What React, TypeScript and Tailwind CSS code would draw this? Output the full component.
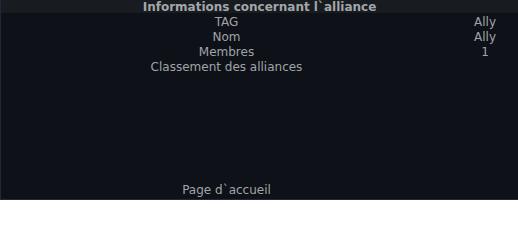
const rows = [
  { label: "TAG", value: "Ally" },
  { label: "Nom", value: "Ally" },
  { label: "Membres", value: "1" },
  { label: "Classement des alliances", value: "" },
]

export default function App() {
  return (
    <div className="flex h-[200px] w-[518px] flex-col border-b border-l border-[#1d2a3c] bg-[#0e1117] text-[12px] text-[#a0a4a8] [font-family:'DejaVu_Sans',sans-serif]">
      <div className="h-[13px] bg-[#181b20] text-center text-[12px] font-bold leading-[14px] text-[#a3a6aa]">
        Informations concernant l`alliance
      </div>
      <div className="pt-[2px]">
        {rows.map((row) => (
          <div key={row.label} className="grid grid-cols-[451px_1fr] leading-[15px]">
            <span className="text-center">{row.label}</span>
            <span className="text-center">{row.value}</span>
          </div>
        ))}
      </div>
      <div className="flex-1" />
      <div className="grid grid-cols-[451px_1fr] pb-[1px] leading-[15px]">
        <span className="text-center">Page d`accueil</span>
        <span />
      </div>
    </div>
  )
}
